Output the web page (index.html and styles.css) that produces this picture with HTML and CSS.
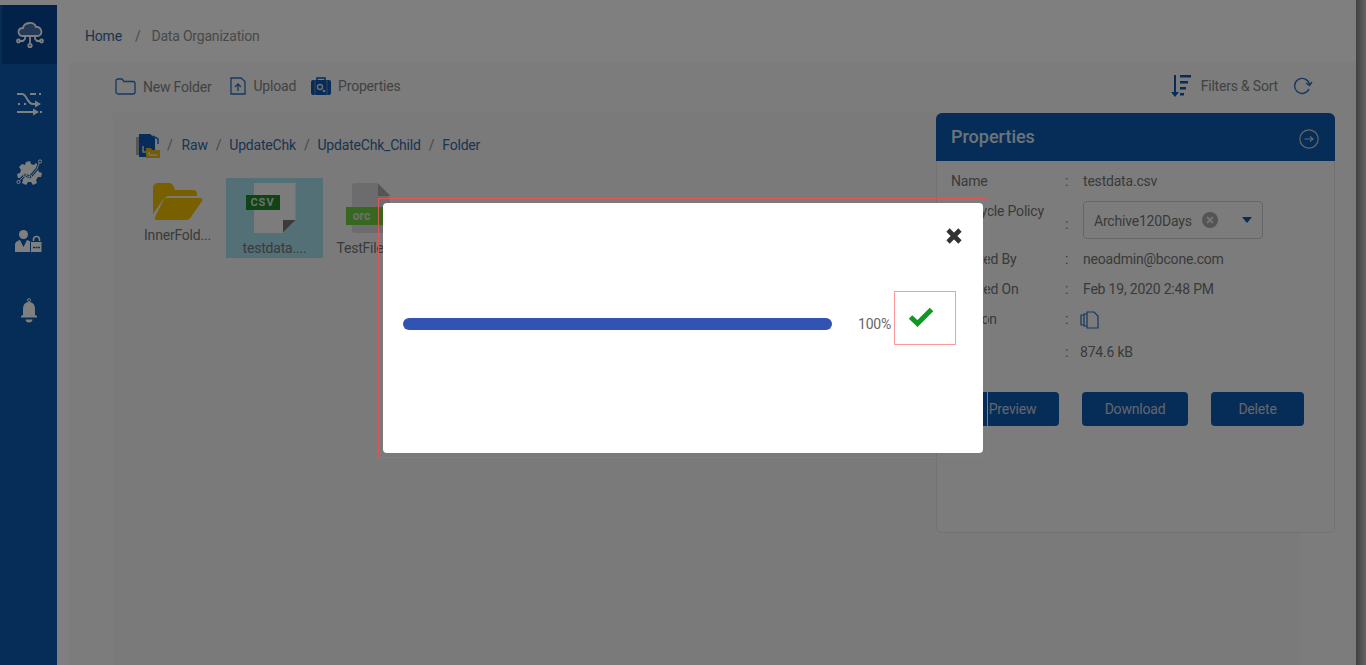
FILE: index.html
```html
<!DOCTYPE html>
<html lang="en">
<head>
<meta name="viewport" content="width=device-width, initial-scale=1.0">
<link rel="stylesheet" href="styles.css">
<title>Data Organization</title>
</head>
<body>
  <div class="app">
    <nav class="sidebar">
      <div class="nav-item active">
        <svg width="28" height="28" viewBox="0 0 28 28" fill="none" stroke="#fff" stroke-width="1.800"><path d="M7 15c-6 0-6-8 0-8 1-6 11-7 13-1 6-1 8 9 1 9z" fill="#fff" fill-opacity=".25"/><path d="M9 15v3l-2 2H4M14 15v7M19 15v3l2 2h3"/><circle cx="2.500" cy="20" r="1.500"/><circle cx="14" cy="24.500" r="1.700"/><circle cx="25.500" cy="20" r="1.500"/></svg>
      </div>
      <div class="nav-item">
        <svg width="26" height="26" viewBox="0 0 26 26" fill="none" stroke="#fff" stroke-width="2"><path d="M1 4h5c5 0 5 10 11 10h3"/><path d="M1 22h17"/><path d="M19 10.500l6 3.500-6 3.500zM17 18.500l6 3.500-6 3.500z" fill="#fff" stroke="none"/><path d="M14 4h6M23 4h2M2 14h2M8 14h2M24 22h2"/></svg>
      </div>
      <div class="nav-item">
        <svg width="26" height="26" viewBox="0 0 26 26" fill="none"><path d="M10 3l4-1 1 3 3 1 2-2 3 3-1 3 1 3 3 1-1 4-3 0-2 3 1 3-4 2-2-3h-3l-2 3-4-2 1-3-2-2-3 0-1-4 3-1 1-3-2-3 3-3 3 1z" fill="#fff"/><path d="M2 23l7-7 5 2 7-8 3-8" stroke="#0c5ab0" stroke-width="2.800"/><path d="M2 23l7-7 5 2 7-8 3-8" stroke="#fff" stroke-width=".9"/><circle cx="2.500" cy="23" r="1.600" fill="#0c5ab0" stroke="#fff"/><circle cx="9" cy="16" r="1.400" fill="#0c5ab0" stroke="#fff"/><circle cx="14.500" cy="18" r="1.400" fill="#0c5ab0" stroke="#fff"/><circle cx="24" cy="2.500" r="1.600" fill="#0c5ab0" stroke="#fff"/></svg>
      </div>
      <div class="nav-item">
        <svg width="27" height="23" viewBox="0 0 27 23" fill="none"><circle cx="8.500" cy="4.500" r="4.500" fill="#fff"/><path d="M0 22v-7c0-3 2-4 5-5l3.500 7 3.500-7c2 .5 4 1.500 4 3v9z" fill="#fff"/><rect x="15.500" y="11.500" width="11.500" height="11" rx="1" fill="#fff" stroke="#0c5ab0"/><path d="M18.500 11v-1.500a3 3 0 0 1 6 0V11" stroke="#fff" stroke-width="1.600"/><path d="M18 17.500h7" stroke="#0c5ab0" stroke-width="1.600" stroke-dasharray="2 .6"/></svg>
      </div>
      <div class="nav-item">
        <svg width="18" height="26" viewBox="0 0 18 26" fill="#fff"><circle cx="9" cy="2.200" r="1.500" fill="none" stroke="#fff"/><path d="M9 4c-4 0-6 3-6 7v6l-2 1v1.500h16V18l-2-1v-6c0-4-2-7-6-7z"/><path d="M0 20.500h18" stroke="#0c5ab0" stroke-width=".8"/><path d="M5.500 21.500h7c0 4-7 4-7 0z"/></svg>
      </div>
    </nav>

    <main class="main">
      <div class="crumbs">
        <span class="link">Home</span><span class="sep">/</span><span class="muted">Data Organization</span>
      </div>
      <section class="workspace">
        <div class="toolbar">
          <div class="tool tool-folder">
            <svg width="21" height="17" viewBox="0 0 21 17" fill="none" stroke="#2a6fc0" stroke-width="1.300"><path d="M1 3c0-1 .5-2 2-2h4l2 2.500h9c1 0 2 .5 2 2V14c0 1-1 2-2 2H3c-1 0-2-1-2-2z"/></svg>
            <span class="tool-label low">New Folder</span>
          </div>
          <div class="tool tool-upload">
            <svg width="16" height="18" viewBox="0 0 16 18" fill="none" stroke="#2a6fc0" stroke-width="1.300"><path d="M1 1h10l4 3.500V17H1z"/><path d="M8 14V7M5 10l3-3 3 3"/></svg>
            <span class="tool-label">Upload</span>
          </div>
          <div class="tool tool-props">
            <svg width="20" height="18" viewBox="0 0 20 18"><rect x="0" y="3" width="20" height="15" rx="2" fill="#0a58b4"/><path d="M6 3V1h8v2" fill="none" stroke="#0a58b4" stroke-width="1.500"/><path d="M4 3v15M16 3v15" stroke="#999" stroke-width=".8"/><circle cx="9" cy="10" r="2.500" fill="none" stroke="#ddd" stroke-width="1.400"/><circle cx="13" cy="14" r="1.300" fill="#ddd"/></svg>
            <span class="tool-label">Properties</span>
          </div>
          <div class="tool-right">
            <svg class="sort-icon" width="22" height="24" viewBox="0 0 22 24" fill="#0a58b4"><path d="M4 1h2v17h3l-4 5-4-5h3z"/><rect x="10" y="1" width="11" height="2.500"/><rect x="10" y="7" width="8" height="2.500"/><rect x="10" y="13" width="6" height="2.500"/><rect x="10" y="19" width="4" height="2.500"/></svg>
            <span class="tool-label">Filters &amp; Sort</span>
            <svg class="refresh-icon" width="20" height="18" viewBox="0 0 20 18" fill="none" stroke="#2a6fc0" stroke-width="1.400"><path d="M16.500 7.500A7.500 7.500 0 1 0 16 12"/><path d="M13 6l3.500 2.500L19 5"/></svg>
          </div>
        </div>

        <div class="content">
          <div class="browser">
            <div class="path">
              <svg width="24" height="24" viewBox="0 0 24 24"><path d="M0 3h8v18H0z" fill="#aaa"/><path d="M3 0h11l5 4v19H3z" fill="#0a58b4"/><path d="M7 12v6h3" stroke="#ddd" stroke-width="1.500" fill="none"/><path d="M17 2l5 3v5" stroke="#2a6fc0" stroke-width="1.500" fill="none"/><path d="M10 14h5l1 2h8v8H10z" fill="#e6b814"/><path d="M13 18v3h8" stroke="#fff" fill="none"/></svg>
              <span class="sep first">/</span><span class="link">Raw</span>
              <span class="sep">/</span><span class="link">UpdateChk</span>
              <span class="sep">/</span><span class="link">UpdateChk_Child</span>
              <span class="sep">/</span><span class="link">Folder</span>
            </div>
            <div class="files">
              <div class="file folder-file">
                <svg class="thumb folder-thumb" width="50" height="37" viewBox="0 0 50 37"><path d="M0 5c0-3 2-5 5-5h11c3 0 4 2 5 4l1 3h18c3 0 4 2 4 4v2H17c-4 0-6 2-8 5L0 31z" fill="#f0c000"/><path d="M12 15h35c2 0 3 1 2 3L38 34c-1 2-3 3-5 3H4c-2 0-3-1-2-3l8-16c1-2 1-3 2-3z" fill="#f0c000"/></svg>
                <span class="file-name">InnerFold...</span>
              </div>
              <div class="file selected">
                <div class="doc-icon csv-icon">
                  <div class="doc-page"></div>
                  <div class="doc-fold"></div>
                  <span class="doc-tag csv-tag">CSV</span>
                </div>
                <span class="file-name">testdata....</span>
              </div>
              <div class="file">
                <div class="doc-icon orc-icon">
                  <div class="doc-page"></div>
                  <div class="doc-fold"></div>
                  <span class="doc-tag orc-tag">orc</span>
                </div>
                <span class="file-name">TestFile.orc</span>
              </div>
            </div>
          </div>

          <aside class="props">
            <header class="props-head">
              <h2>Properties</h2>
              <svg width="20" height="20" viewBox="0 0 20 20" fill="none" stroke="#ccc" stroke-width="1.200"><circle cx="10" cy="10" r="9.200"/><path d="M5.500 10h8.500M11 7.500l3 2.500-3 2.500"/></svg>
            </header>
            <div class="props-body">
              <div class="prop-row"><span class="prop-key">Name</span><span class="colon">:</span><span>testdata.csv</span></div>
              <div class="prop-row policy">
                <span class="prop-key">Lifecycle Policy</span><span class="colon">:</span>
                <div class="select">
                  <span>Archive120Days</span>
                  <span class="clear"><svg width="16" height="16" viewBox="0 0 16 16"><circle cx="8" cy="8" r="8" fill="#a8a8a8"/><path d="M5 5l6 6M11 5l-6 6" stroke="#e8e8e8" stroke-width="2"/></svg></span>
                  <span class="caret"></span>
                </div>
              </div>
              <div class="prop-row"><span class="prop-key">Created By</span><span class="colon">:</span><span>neoadmin@bcone.com</span></div>
              <div class="prop-row"><span class="prop-key">Created On</span><span class="colon">:</span><span>Feb 19, 2020 2:48 PM</span></div>
              <div class="prop-row version">
                <span class="prop-key">Version</span><span class="colon">:</span>
                <svg class="version-icon" width="20" height="18" viewBox="0 0 20 18" fill="none" stroke="#2a6fc0" stroke-width="1.200"><path d="M8 1h7l4 4v12H8z"/><path d="M8 3H5v12h3M5 4H2v10h3"/></svg>
              </div>
              <div class="prop-row size"><span class="prop-key">Size</span><span class="colon">:</span><span>874.6 kB</span></div>
              <div class="prop-actions">
                <button class="btn btn-preview">Preview</button>
                <button class="btn btn-download">Download</button>
                <button class="btn btn-delete">Delete</button>
              </div>
            </div>
          </aside>
        </div>
      </section>
    </main>
    <div class="scrollbar"></div>
  </div>

  <!-- upload dialog, sits over the dimmed page -->
  <div class="overlay">
    <div class="modal-outline">
      <div class="modal">
        <svg class="modal-close" width="18" height="18" viewBox="0 0 18 18"><path d="M3 3l12 12M15 3L3 15" stroke="#333" stroke-width="4.600"/></svg>
        <div class="progress-row">
          <div class="progress"><div class="progress-fill" style="width:100%"></div></div>
          <span class="percent">100%</span>
          <div class="done">
            <svg width="26" height="20" viewBox="0 0 26 20"><path d="M2.500 10l7 6.500L23.500 2.500" fill="none" stroke="#0c9a20" stroke-width="5"/></svg>
          </div>
        </div>
      </div>
    </div>
  </div>
</body>
</html>
```

FILE: styles.css
```css
* {
  box-sizing: border-box;
}
html, body {
  margin: 0;
  height: 100%;
  overflow: hidden;
}
body {
  font-family: Roboto, "Liberation Sans", sans-serif;
  font-size: 14px;
  letter-spacing: -0.2px;
  color: #747474;
  background: #fff;
}
.app {
  display: flex;
  height: 665px;
  padding-top: 5px;
  background: #fff;
}
.sidebar {
  width: 57px;
  flex: none;
  margin-top: -5px;
  padding-top: 5px;
  background: linear-gradient(#fff 5px, #0c5ab0 5px);
}
.nav-item {
  height: 69.5px;
  display: flex;
  align-items: center;
  justify-content: center;
}
.nav-item.active {
  height: 59px;
  margin: 0 0 4px 2px;
  background: #064494;
}
.main {
  flex: 1;
  min-width: 0;
  display: flex;
  flex-direction: column;
}
.crumbs {
  height: 57px;
  padding: 23px 0 0 28px;
  line-height: 17px;
}
.link {
  color: #34689f;
}
.muted {
  color: #929292;
}
.sep {
  color: #929292;
  margin: 0 8px;
}
.crumbs .sep {
  margin: 0 11px 0 13px;
}
.workspace {
  flex: 1;
  margin-left: 13px;
  background: #f9f9f9;
  display: flex;
  flex-direction: column;
}
.toolbar {
  display: flex;
  align-items: center;
  height: 51px;
  padding: 0 43px 3px 45px;
}
.tool {
  display: flex;
  align-items: center;
}
.tool svg { margin-right: 7px; }
.tool-folder { margin-right: 19px; }
.tool-upload { margin-right: 15px; }
.tool-label {
  color: #848484;
}
.tool-label.low {
  padding-top: 2px;
}
.tool-right {
  margin-left: auto;
  display: flex;
  align-items: center;
}
.sort-icon { margin-right: 9px; }
.refresh-icon { margin-left: 15px; }
.content {
  flex: 1;
  display: flex;
  justify-content: space-between;
  margin-left: 43px;
  padding-right: 21px;
  background: linear-gradient(90deg, #f5f5f5 0, #f5f5f5 1187px, #f9f9f9 1187px);
}
.browser {
  padding: 20px 0 0 23px;
}
.path {
  display: flex;
  align-items: center;
  height: 24px;
}
.path svg {
  margin-top: 2px;
}
.path .sep.first {
  margin: 0 9px 0 7px;
}
.files {
  display: flex;
  margin: 21px 0 0 -7px;
}
.file {
  width: 97px;
  height: 80px;
  display: flex;
  flex-direction: column;
  align-items: center;
  justify-content: flex-end;
  padding-bottom: 1px;
}
.file.selected {
  background: #a8e0ef;
}
.folder-file {
  justify-content: flex-start;
  padding-top: 5px;
}
.file-name {
  color: #747474;
  line-height: 18px;
  white-space: nowrap;
}
.folder-thumb {
  margin-bottom: 6px;
}
.doc-icon {
  position: relative;
  width: 60px;
  height: 50px;
  margin-bottom: 6px;
}
.doc-page {
  position: absolute;
  left: 9px;
  top: 0;
  width: 42px;
  height: 50px;
  background: #f8f8f8;
  clip-path: polygon(0 0, 100% 0, 100% 74%, 70% 100%, 0 100%);
}
.doc-fold {
  position: absolute;
  left: 38px;
  top: 37px;
  width: 13px;
  height: 13px;
  background: #777;
  clip-path: polygon(100% 0, 0 100%, 0 0);
}
.doc-tag {
  position: absolute;
  font-size: 11px;
  font-weight: 700;
  color: #ddd;
  text-align: center;
  letter-spacing: 1px;
}
.csv-tag {
  left: 1px;
  top: 12px;
  width: 34px;
  height: 15px;
  line-height: 15px;
  background: #1f8a2a;
}
.orc-icon .doc-page {
  left: 10px;
  width: 38px;
  background: #d8d8dc;
  border-radius: 3px;
  clip-path: polygon(0 0, 68% 0, 100% 30%, 100% 100%, 0 100%);
}
.orc-icon .doc-fold {
  left: 36px;
  top: 0;
  background: #aaa;
  clip-path: polygon(0 0, 100% 100%, 0 100%);
}
.orc-tag {
  left: 4px;
  top: 24px;
  width: 44px;
  height: 18px;
  line-height: 18px;
  font-size: 12px;
  letter-spacing: 0;
  padding-right: 12px;
  background: #6fd040;
}
.props {
  width: 399px;
  height: 420px;
  border: 1px solid #e4e4e4;
  border-radius: 6px;
  background: #f9f9f9;
}
.props-head {
  height: 48px;
  margin: -1px -1px 0;
  padding: 3px 16px 0 15px;
  display: flex;
  align-items: center;
  justify-content: space-between;
  background: #0c5ab0;
  border-radius: 6px 6px 0 0;
}
.props-head h2 {
  margin: -4px 0 0;
  font-size: 18px;
  font-weight: 500;
  letter-spacing: 0;
  color: #d8e8f0;
}
.props-body {
  padding: 10px 14px 0;
}
.prop-row {
  display: grid;
  grid-template-columns: 114px 18px 1fr;
  align-items: center;
  height: 20px;
  margin-bottom: 10px;
}
.prop-row.policy {
  height: 38px;
  margin-bottom: 10px;
}
.policy .prop-key {
  align-self: start;
  margin-top: 2px;
}
.policy .colon {
  padding-top: 8px;
}
.prop-row.version {
  align-items: start;
  margin-top: 12px;
  margin-bottom: 8px;
}
.version-icon {
  margin-left: -4px;
}
.prop-row.size {
  margin-top: 11px;
  grid-template-columns: 114px 15px 1fr;
}
.select {
  width: 180px;
  height: 38px;
  border: 1px solid #ccc;
  border-radius: 4px;
  display: flex;
  align-items: center;
  padding: 2px 0 0 10px;
}
.clear {
  display: flex;
  margin-left: 10px;
  margin-top: -2px;
}
.caret {
  width: 0;
  height: 0;
  margin-left: 24px;
  margin-top: -3px;
  border: 5.5px solid transparent;
  border-top: 6px solid #0c5ab0;
  border-bottom: 0;
}
.prop-actions {
  display: flex;
  margin: 30px 0 0 15px;
}
.btn {
  height: 34px;
  flex: none;
  border: 0;
  border-radius: 4px;
  background: #0c5ab0;
  color: #c8ccd4;
  font: 14px Roboto, "Liberation Sans", sans-serif;
  letter-spacing: -0.2px;
  margin-right: 23px;
}
.btn-preview { width: 93px; }
.btn-download { width: 106px; }
.btn-delete { width: 93px; }
.scrollbar {
  width: 10px;
  flex: none;
  margin-top: -5px;
  background: linear-gradient(90deg, #808080, #c8c8c8);
}
.overlay {
  position: fixed;
  top: 0;
  right: 0;
  bottom: 0;
  left: 0;
  background: rgba(0, 0, 0, 0.5);
  display: flex;
  justify-content: center;
  align-items: flex-start;
  padding-top: 198px;
}
.modal-outline {
  width: 610px;
  height: 260px;
  border: 1px solid #e05555;
  padding: 4px;
}
.modal {
  position: relative;
  height: 250px;
  background: #fff;
  border-radius: 4px;
  padding: 88px 27px 0 20px;
}
.modal-close {
  position: absolute;
  top: 24px;
  right: 20px;
}
.progress-row {
  display: flex;
  align-items: center;
}
.progress {
  width: 429px;
  height: 12px;
  flex: none;
  margin-top: 12px;
  border-radius: 6px;
  background: #eee;
  overflow: hidden;
}
.progress-fill {
  height: 100%;
  background: #3353b3;
}
.percent {
  margin: 11px 0 0 26px;
  color: #666;
  width: 36px;
}
.done {
  width: 62px;
  height: 54px;
  flex: none;
  border: 1px solid #f99;
  display: flex;
  align-items: center;
  justify-content: center;
  padding: 0 8px 3px 0;
}
```
